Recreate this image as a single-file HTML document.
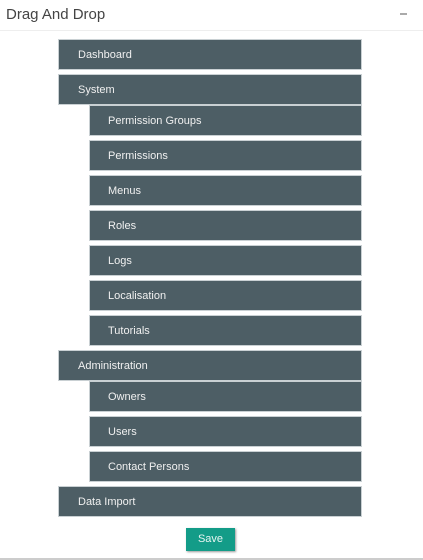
<!DOCTYPE html>
<html><head><style>
body{margin:0;width:423px;height:560px;background:#fff;font-family:"Liberation Sans",sans-serif;position:relative;overflow:hidden}
.h{position:absolute;left:6px;top:6px;font-size:15px;color:#444}
.m{position:absolute;left:400px;top:13px;width:7px;height:2px;background:#aaa}
.hl{position:absolute;left:0;top:30px;width:423px;height:1px;background:#eee}
.i{position:absolute;box-sizing:border-box;height:31px;background:#4d5e65;border:1px solid #c9d0d3;color:#f0f0f0;font-size:11px;line-height:30px}
.a{left:58px;width:304px;padding-left:19px}
.b{left:89px;width:273px;padding-left:18px}
.s{position:absolute;left:186px;top:528px;width:49px;height:23px;background:#139c88;color:#e8f5f2;font-size:11px;text-align:center;line-height:23px;box-shadow:1px 1px 2px #999}
.bl{position:absolute;left:0;top:558px;width:423px;height:2px;background:#ccc}
</style></head><body>
<div class="h">Drag And Drop</div><div class="m"></div><div class="hl"></div>
<div class="i a" style="top:39px">Dashboard</div>
<div class="i a" style="top:74px">System</div>
<div class="i b" style="top:105px">Permission Groups</div>
<div class="i b" style="top:140px">Permissions</div>
<div class="i b" style="top:175px">Menus</div>
<div class="i b" style="top:210px">Roles</div>
<div class="i b" style="top:245px">Logs</div>
<div class="i b" style="top:280px">Localisation</div>
<div class="i b" style="top:315px">Tutorials</div>
<div class="i a" style="top:350px">Administration</div>
<div class="i b" style="top:381px">Owners</div>
<div class="i b" style="top:416px">Users</div>
<div class="i b" style="top:451px">Contact Persons</div>
<div class="i a" style="top:486px">Data Import</div>
<div class="s">Save</div>
<div class="bl"></div>
</body></html>
